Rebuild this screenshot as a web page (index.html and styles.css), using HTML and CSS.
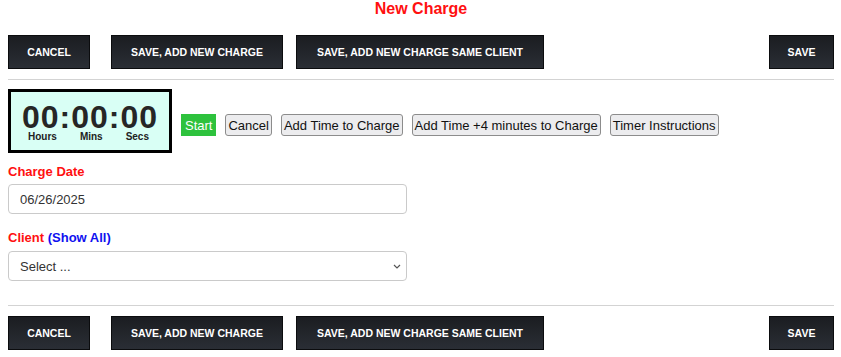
FILE: index.html
```html
<!DOCTYPE html>
<html lang="en">
<head>
  <meta charset="UTF-8" />
  <title>New Charge</title>
  <link rel="stylesheet" href="styles.css">
</head>
<body>
  <h1 class="page-title">New Charge</h1>

  <div class="action-bar">
    <button class="btn-dark w-cancel">CANCEL</button>
    <button class="btn-dark w-new">SAVE, ADD NEW CHARGE</button>
    <button class="btn-dark w-same">SAVE, ADD NEW CHARGE SAME CLIENT</button>
    <button class="btn-dark w-save">SAVE</button>
  </div>
  <hr class="divider" />

  <div class="timer-row">
    <div class="timer">
      <div class="timer-digits">00:00:00</div>
      <div class="timer-labels">
        <span>Hours</span>
        <span>Mins</span>
        <span>Secs</span>
      </div>
    </div>
    <div class="timer-controls">
      <button class="btn-start">Start</button>
      <button class="btn-plain">Cancel</button>
      <button class="btn-plain">Add Time to Charge</button>
      <button class="btn-plain">Add Time +4 minutes to Charge</button>
      <button class="btn-plain">Timer Instructions</button>
    </div>
  </div>

  <div class="field first">
    <label class="field-label">Charge Date</label>
    <input class="field-input" type="text" value="06/26/2025" />
  </div>

  <div class="field">
    <label class="field-label">Client <a class="show-all" href="#">(Show All)</a></label>
    <div class="select-wrap">
      <select class="field-input">
        <option>Select ...</option>
      </select>
      <svg class="chevron" width="8" height="5" viewBox="0 0 8 5">
        <path d="M1 1l3 3 3-3" fill="none" stroke="#555" stroke-width="1.2" />
      </svg>
    </div>
  </div>

  <hr class="divider bottom" />
  <div class="action-bar bottom">
    <button class="btn-dark w-cancel">CANCEL</button>
    <button class="btn-dark w-new">SAVE, ADD NEW CHARGE</button>
    <button class="btn-dark w-same">SAVE, ADD NEW CHARGE SAME CLIENT</button>
    <button class="btn-dark w-save">SAVE</button>
  </div>
</body>
</html>
```

FILE: styles.css
```css
* { box-sizing: border-box; }
body {
  margin: 0 7px 0 8px;
  font-family: 'Liberation Sans', Arial, sans-serif;
  background: #fff;
  color: #333;
}
.page-title {
  margin: 0;
  font-size: 16px;
  line-height: 18px;
  text-align: center;
  color: #ff1010;
}
.action-bar {
  display: flex;
  margin-top: 17px;
}
.action-bar.bottom { margin-top: 10px; }
.btn-dark {
  height: 34px;
  padding: 0;
  border: 1px solid #0b0c0e;
  background: linear-gradient(to bottom, #1b1d21, #2a2e35);
  color: #fff;
  font-family: 'Liberation Sans', Arial, sans-serif;
  font-size: 10.5px;
  font-weight: bold;
  text-align: center;
}
.w-cancel { width: 82px; margin-right: 21px; }
.w-new { width: 172px; margin-right: 13px; }
.w-same { width: 248px; }
.w-save { width: 65px; margin-left: auto; }
.divider {
  margin: 10px 0 0;
  border: none;
  border-top: 1px solid #d3d3d3;
}
.divider.bottom { margin-top: 24px; }

.timer-row {
  display: flex;
  align-items: center;
  margin-top: 9px;
}
.timer {
  width: 164px;
  height: 64px;
  border: 3px solid #000;
  background: #d9fff5;
  padding: 12px 0 0;
}
.timer-digits {
  font-size: 32px;
  line-height: 26px;
  font-weight: bold;
  letter-spacing: 1px;
  text-align: center;
  color: #262626;
}
.timer-labels {
  display: flex;
  justify-content: space-between;
  margin-top: 2px;
  padding: 0 20px 0 17px;
  font-size: 10px;
  line-height: 10px;
  font-weight: bold;
  color: #222;
}
.timer-controls {
  display: flex;
  gap: 9px;
  margin-left: 9px;
  margin-top: 8px;
}
.btn-start {
  height: 22px;
  padding: 0 4px;
  border: none;
  background: #2ec23d;
  color: #fff;
  font-family: 'Liberation Sans', Arial, sans-serif;
  font-size: 13px;
}
.btn-plain {
  height: 22px;
  padding: 0 2px;
  border: 1px solid #8c8c8c;
  border-radius: 3px;
  background: #ececee;
  color: #111;
  font-family: 'Liberation Sans', Arial, sans-serif;
  font-size: 13px;
}

.field { margin-top: 16px; width: 399px; }
.field.first { margin-top: 11px; }
.field-label {
  display: block;
  margin-bottom: 4px;
  font-size: 13px;
  line-height: 16px;
  font-weight: bold;
  color: #ff1010;
}
.show-all {
  color: #1010f0;
  text-decoration: none;
}
.field-input {
  display: block;
  width: 100%;
  height: 30px;
  padding: 0 11px;
  border: 1px solid #cacaca;
  border-radius: 4px;
  background: #fff;
  color: #333;
  font-family: 'Liberation Sans', Arial, sans-serif;
  font-size: 13px;
}
.field + .field .field-label { margin-bottom: 5px; }
select.field-input {
  appearance: none;
  -webkit-appearance: none;
}
.select-wrap { position: relative; }
.chevron {
  position: absolute;
  right: 6px;
  top: 13px;
}
```
